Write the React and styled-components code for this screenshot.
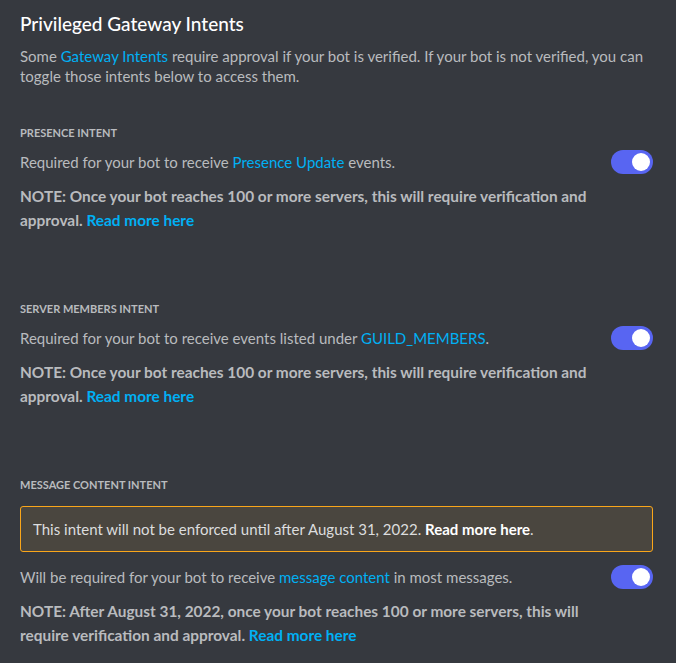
import React from "react";
import styled, { createGlobalStyle } from "styled-components";

const Global = createGlobalStyle`
  html, body { margin: 0; padding: 0; background: #36393f; }
  body { font-family: Lato, "Noto Sans", sans-serif; }
`;

const Page = styled.div`
  box-sizing: border-box;
  width: 676px;
  min-height: 663px;
  padding: 12px 23px 0 20px;
  background: #36393f;
  color: #b9bbbe;
`;

const Title = styled.h2`
  margin: 0;
  font-size: 19px;
  line-height: 24px;
  font-weight: 500;
  color: #ffffff;
`;

const Description = styled.p`
  margin: 10px 0 0;
  font-size: 15px;
  line-height: 20px;
  color: #b9bbbe;
`;

const Link = styled.a`
  color: #00b0f4;
  text-decoration: none;
  font-weight: ${(p) => (p.$bold ? 700 : "inherit")};
`;

const Section = styled.section`
  margin-top: ${(p) => (p.$first ? "39px" : "69px")};
`;

const Header = styled.h5`
  margin: 0;
  font-size: 11px;
  line-height: 16px;
  font-weight: 700;
  text-transform: uppercase;
  color: #b9bbbe;
`;

const Row = styled.div`
  display: flex;
  align-items: center;
  justify-content: space-between;
  margin-top: ${(p) => p.$mt || "9px"};
  min-height: 24px;
`;

const RowText = styled.span`
  font-size: 15px;
  line-height: 20px;
  color: #b9bbbe;
`;

const Track = styled.div`
  position: relative;
  width: 42px;
  height: 24px;
  border-radius: 12px;
  background: #5865f2;
  flex-shrink: 0;
`;

const Knob = styled.span`
  position: absolute;
  top: 3px;
  right: 3px;
  width: 18px;
  height: 18px;
  border-radius: 50%;
  background: #ffffff;
`;

const Note = styled.p`
  margin: 10px 0 0;
  font-size: 15.4px;
  line-height: 24px;
  font-weight: 700;
  color: #b9bbbe;
  padding-right: 43px;
`;

const Warning = styled.div`
  margin-top: 13px;
  padding: 10px 12px;
  border: 1px solid #faa61a;
  border-radius: 3px;
  background: #4a463f;
  font-size: 15px;
  line-height: 24px;
  color: #dcddde;
`;

const Strong = styled.strong`
  color: #ffffff;
  font-weight: 700;
`;

const Toggle = () => (
  <Track>
    <Knob />
  </Track>
);

export default function App() {
  return (
    <>
      <Global />
      <Page>
        <Title>Privileged Gateway Intents</Title>
        <Description>
          Some <Link>Gateway Intents</Link> require approval if your bot is verified. If your bot is not verified, you can toggle those intents below to access them.
        </Description>

        <Section $first>
          <Header>Presence Intent</Header>
          <Row>
            <RowText>
              Required for your bot to receive <Link>Presence Update</Link> events.
            </RowText>
            <Toggle />
          </Row>
          <Note>
            NOTE: Once your bot reaches 100 or more servers, this will require verification and approval. <Link $bold>Read more here</Link>
          </Note>
        </Section>

        <Section>
          <Header>Server Members Intent</Header>
          <Row>
            <RowText>
              Required for your bot to receive events listed under <Link>GUILD_MEMBERS</Link>.
            </RowText>
            <Toggle />
          </Row>
          <Note>
            NOTE: Once your bot reaches 100 or more servers, this will require verification and approval. <Link $bold>Read more here</Link>
          </Note>
        </Section>

        <Section>
          <Header>Message Content Intent</Header>
          <Warning>
            This intent will not be enforced until after August 31, 2022. <Strong>Read more here</Strong>.
          </Warning>
          <Row $mt="13px">
            <RowText>
              Will be required for your bot to receive <Link>message content</Link> in most messages.
            </RowText>
            <Toggle />
          </Row>
          <Note>
            NOTE: After August 31, 2022, once your bot reaches 100 or more servers, this will require verification and approval. <Link $bold>Read more here</Link>
          </Note>
        </Section>
      </Page>
    </>
  );
}
